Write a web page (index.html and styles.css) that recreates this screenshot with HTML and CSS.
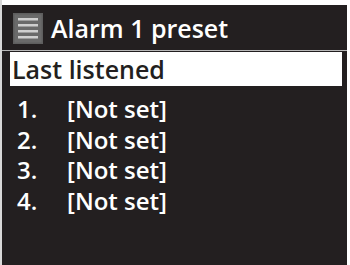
FILE: index.html
```html
<!DOCTYPE html>
<html>
<head>
<meta charset="utf-8">
<link rel="stylesheet" href="styles.css">
</head>
<body>
<div class="screen">
  <div class="header">
    <svg class="icon" width="30" height="31" viewBox="0 0 30 31">
      <rect x="0" y="0" width="30" height="31" fill="#5e5e5e"/>
      <rect x="1.5" y="1.5" width="27" height="28" fill="#6a6a6a"/>
      <rect x="5" y="5" width="20" height="2.5" fill="#cfcfcf"/>
      <rect x="5" y="11" width="20" height="2.5" fill="#cfcfcf"/>
      <rect x="5" y="17" width="20" height="2.5" fill="#cfcfcf"/>
      <rect x="5" y="23" width="20" height="2.5" fill="#cfcfcf"/>
    </svg>
    <span class="title">Alarm 1 preset</span>
  </div>
  <div class="selected">Last listened</div>
  <div class="list">
    <div class="row"><span class="num">1.</span><span>[Not set]</span></div>
    <div class="row"><span class="num">2.</span><span>[Not set]</span></div>
    <div class="row"><span class="num">3.</span><span>[Not set]</span></div>
    <div class="row"><span class="num">4.</span><span>[Not set]</span></div>
  </div>
</div>
</body>
</html>
```
FILE: styles.css
```css
html, body {
  margin: 0;
  padding: 0;
  background: #ffffff;
}
body {
  width: 350px;
  height: 265px;
  overflow: hidden;
  background: linear-gradient(to right, #d8d8d8 0, #d8d8d8 2px, #fff 2px);
}
.screen {
  margin-top: 5px;
  margin-left: 2px;
  width: 345px;
  height: 260px;
  background: #231f20;
  font-family: "Open Sans", "Liberation Sans", sans-serif;
  font-weight: 600;
  font-size: 24px;
  color: #ffffff;
  display: flex;
  flex-direction: column;
}
.header {
  height: 46px;
  box-sizing: border-box;
  display: flex;
  align-items: center;
  padding-left: 11px;
  gap: 8px;
  border-bottom: 1px solid #b8b8b8;
}
.icon {
  flex: none;
  margin-top: 2px;
}
.title {
  font-size: 25px;
  line-height: 30px;
}
.selected {
  margin-top: 1px;
  margin-left: 8px;
  width: 332px;
  height: 34px;
  box-sizing: border-box;
  background: #ffffff;
  color: #231f20;
  font-size: 25px;
  line-height: 34px;
  padding-left: 2px;
}
.list {
  padding-top: 8px;
}
.row {
  display: flex;
  line-height: 30.5px;
  padding-left: 15px;
}
.num {
  width: 50px;
}
```
